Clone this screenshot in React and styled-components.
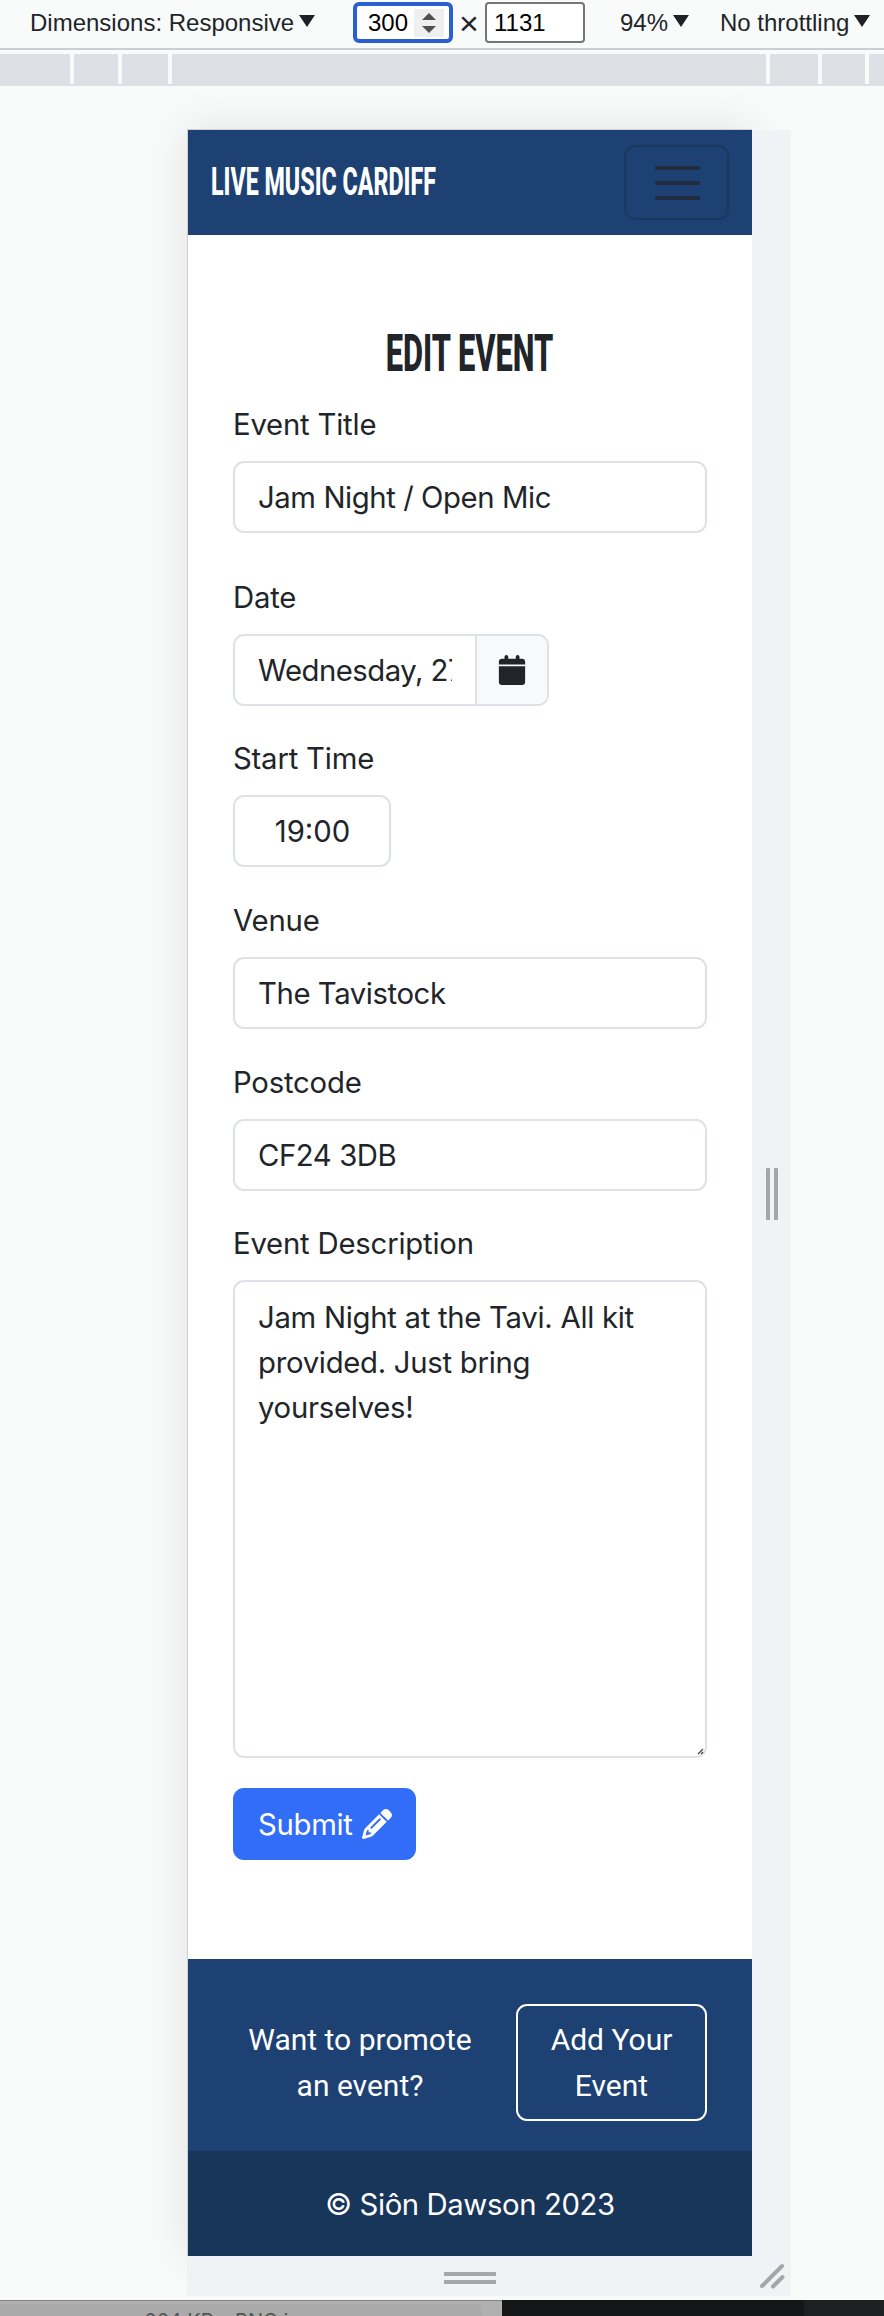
import React from "react";
import styled, { createGlobalStyle } from "styled-components";
import { FaCalendar, FaPencil } from "react-icons/fa6";

const Global = createGlobalStyle`
  *, *::before, *::after { box-sizing: border-box; }
  body { margin: 0; background: #f9fbfa; }
`;

const Window = styled.div`
  width: 884px;
  height: 2316px;
  overflow: hidden;
  display: flex;
  flex-direction: column;
  background: #f9fbfa;
  font-family: Inter, "Liberation Sans", sans-serif;
  color: #212529;
`;

const Toolbar = styled.header`
  height: 50px;
  flex: none;
  display: flex;
  align-items: center;
  padding: 0 0 3px 30px;
  border-bottom: 2px solid #cdced3;
  font: 24px/30px "Liberation Sans", Arial, sans-serif;
  white-space: nowrap;
`;

const Select = styled.div`
  flex: none;
  display: flex;
  align-items: center;
  gap: 5px;
  width: ${(p) => p.$w}px;
  margin-left: ${(p) => p.$gap || 0}px;
  padding-top: 1px;
`;

const Caret = styled.i`
  border: solid transparent;
  border-width: 12px 8px 0;
  border-top-color: #202124;
  margin-top: -4px;
`;

const SizeField = styled.div`
  flex: none;
  width: 100px;
  height: 41px;
  display: flex;
  align-items: center;
  justify-content: space-between;
  padding: 0 5px 0 ${(p) => (p.$focus ? 11 : 7)}px;
  background: #fff;
  color: #000;
  border: ${(p) => (p.$focus ? "4px solid #2a5fcf" : "2px solid #767676")};
  border-radius: ${(p) => (p.$focus ? 6 : 4)}px;
`;

const Spinner = styled.span`
  width: 30px;
  height: 28px;
  background: #efefef;
  display: flex;
  flex-direction: column;
  align-items: center;
  justify-content: space-between;
  padding: 4px 0;
  &::before, &::after { content: ""; border: solid transparent; }
  &::before { border-width: 0 7px 7px; border-bottom-color: #505050; }
  &::after { border-width: 7px 7px 0; border-top-color: #505050; }
`;

const Times = styled.span`
  flex: none;
  width: 32px;
  text-align: center;
  font-size: 34px;
  padding-top: 1px;
`;

const Ruler = styled.div`
  height: 32px;
  flex: none;
  margin-top: 4px;
  display: grid;
  grid-template-columns: 70px 48px 50px 598px 52px 47px 19px;
  background: #dfe0e6;
`;

const Segment = styled.span`
  height: 30px;
  border-left: ${(p) => (p.$first ? 0 : 4)}px solid #f9fbfa;
`;

const Stage = styled.main`
  height: 2214px;
  flex: none;
  padding: 43px 0 0 187px;
`;

const Device = styled.div`
  width: 604px;
  display: grid;
  grid-template-columns: 565px 39px;
  grid-template-rows: 2127px 40px;
`;

const Screen = styled.section`
  display: flex;
  flex-direction: column;
  background: #fff;
  border: solid #cfd0d2;
  border-width: 1px 0 0 1px;
  box-shadow: 0 0 42px rgba(0, 0, 0, 0.1);
`;

const Gutter = styled.div`
  position: relative;
  display: flex;
  align-items: center;
  justify-content: center;
  background: #f1f2f5;
  margin-top: ${(p) => (p.$side ? 1 : 0)}px;
  padding-top: ${(p) => p.$drop || 0}px;
`;

const Grip = styled.span`
  width: ${(p) => (p.$vertical ? 12 : 52)}px;
  height: ${(p) => (p.$vertical ? 52 : 12)}px;
  border: solid #a6a6a6;
  border-width: ${(p) => (p.$vertical ? "0 4px" : "4px 0")};
  border-radius: 1px;
`;

const Navbar = styled.nav`
  height: 105px;
  flex: none;
  padding: 0 23px;
  display: flex;
  align-items: center;
  justify-content: space-between;
  background: #1d4172;
`;

const Condensed = styled.span`
  display: block;
  font-family: Roboto, "Liberation Sans", sans-serif;
  font-weight: 800;
  white-space: nowrap;
  text-transform: uppercase;
  transform-origin: ${(p) => p.$origin} center;
  transform: scaleX(${(p) => p.$squeeze});
`;

const Brand = styled(Condensed)`
  font-size: 38.5px;
  line-height: 46px;
  width: 230px;
  margin-bottom: 2px;
  color: #fff;
`;

const Toggler = styled.button`
  width: 105px;
  height: 75px;
  padding: 0 29px;
  display: flex;
  flex-direction: column;
  justify-content: center;
  gap: 11px;
  background: none;
  border: 2px solid #1b3860;
  border-radius: 11px;
`;

const Bar = styled.span`
  height: 4px;
  width: 45px;
  border-radius: 1px;
  background: #212c3f;
`;

const Form = styled.form`
  flex: 1;
  padding: 86px 45px 0;
  display: flex;
  flex-direction: column;
  align-items: flex-start;
`;

const Title = styled.h1`
  margin: 0 0 16px;
  align-self: stretch;
  height: 64px;
  display: flex;
  justify-content: center;
  align-items: center;
  font-size: 51px;
`;

const Field = styled.div`
  width: ${(p) => p.$w || 474}px;
  height: ${(p) => p.$h}px;
  flex: none;
`;

const Label = styled.label`
  display: block;
  height: 60px;
  padding-top: 1px;
  font-size: 29.3px;
  line-height: 45px;
  white-space: nowrap;
  letter-spacing: -0.2px;
`;

const Box = styled.div`
  height: 72px;
  padding: 12px 22px 0 23px;
  border: 2px solid #dee2e6;
  border-radius: 11px;
  background: #fff;
  font-size: 29.3px;
  line-height: 45px;
  text-align: ${(p) => p.$align || "left"};
  letter-spacing: ${(p) => p.$ls ?? -0.42}px;
  white-space: pre-line;
`;

const TextArea = styled(Box)`
  height: 478px;
  padding-top: 13px;
  position: relative;
`;

const InputGroup = styled.div`
  display: flex;
  height: 72px;
  border: 2px solid #dee2e6;
  border-radius: 11px;
  overflow: hidden;
`;

const DateText = styled.div`
  width: 240px;
  padding: 12px 0 0 23px;
  font-size: 29.3px;
  line-height: 45px;
  letter-spacing: -0.5px;
  span {
    display: block;
    width: 194px;
    overflow: hidden;
    white-space: nowrap;
  }
`;

const Addon = styled.div`
  flex: 1;
  display: flex;
  align-items: center;
  justify-content: center;
  background: #f8f9fa;
  border-left: 2px solid #dee2e6;
  font-size: 30px;
`;

const Resizer = styled.svg`
  position: absolute;
  right: 1px;
  bottom: 1px;
`;

const Submit = styled.button`
  width: 183px;
  height: 72px;
  margin: 0;
  padding: 0 0 0 25px;
  display: flex;
  align-items: center;
  gap: 8px;
  border: 0;
  border-radius: 11px;
  background: #326df7;
  color: #fff;
  font: 29.3px/45px Inter, sans-serif;
  span { width: 96px; text-align: left; letter-spacing: -0.3px; }
  svg { font-size: 30px; }
`;

const Promo = styled.div`
  height: 192px;
  flex: none;
  padding: 45px 45px 0 53px;
  display: flex;
  justify-content: space-between;
  background: #1d4172;
  color: #fff;
  font: 30px/46px Roboto, sans-serif;
  text-align: center;
`;

const Invite = styled.p`
  margin: 0;
  width: 238px;
  padding-top: 13px;
`;

const AddButton = styled.a`
  width: 191px;
  height: 117px;
  padding: 11px 20px 0;
  border: 2px solid #fff;
  border-radius: 11px;
`;

const Copyright = styled.footer`
  height: 105px;
  flex: none;
  display: flex;
  align-items: center;
  justify-content: center;
  padding-top: 2px;
  background: #18355a;
  color: #fff;
  font-size: 29.3px;
  letter-spacing: -0.4px;
`;

const Backdrop = styled.div`
  height: 16px;
  flex: none;
  display: grid;
  grid-template-columns: 502px 302px 80px;
`;

const FileCard = styled.div`
  overflow: hidden;
  background: #b0b0b0;
  border-top: 1px solid #858585;
  padding: 3px 20px 0 0;
  div {
    height: 30px;
    padding: 5px 0 0 144px;
    border-radius: 0 8px 0 0;
    background: #a9aaa9;
    color: #555;
    font: 20px/24px Inter, sans-serif;
    white-space: pre;
  }
`;

const Dark = styled.div`
  background: ${(p) => p.$tone};
`;

export default function App() {
  return (
    <>
      <Global />
      <Window>
        <Toolbar>
          <Select $w={323}>Dimensions: Responsive <Caret /></Select>
          <SizeField $focus>300<Spinner /></SizeField>
          <Times>×</Times>
          <SizeField>1131</SizeField>
          <Select $w={100} $gap={35}>94% <Caret /></Select>
          <Select $w={160}>No throttling <Caret /></Select>
        </Toolbar>
        <Ruler>
          {[0, 1, 2, 3, 4, 5, 6].map((n) => <Segment key={n} $first={n === 0} />)}
        </Ruler>
        <Stage>
          <Device>
            <Screen>
              <Navbar>
                <Brand $squeeze={0.603} $origin="left">Live Music Cardiff</Brand>
                <Toggler aria-label="Menu"><Bar /><Bar /><Bar /></Toggler>
              </Navbar>
              <Form>
                <Title><Condensed $squeeze={0.605} $origin="center">Edit Event</Condensed></Title>
                <Field $h={173}>
                  <Label>Event Title</Label>
                  <Box>Jam Night / Open Mic</Box>
                </Field>
                <Field $h={161} $w={316}>
                  <Label>Date</Label>
                  <InputGroup>
                    <DateText><span>Wednesday, 27 September</span></DateText>
                    <Addon><FaCalendar /></Addon>
                  </InputGroup>
                </Field>
                <Field $h={162} $w={158}>
                  <Label>Start Time</Label>
                  <Box $align="center" $ls={0}>19:00</Box>
                </Field>
                <Field $h={162}>
                  <Label>Venue</Label>
                  <Box>The Tavistock</Box>
                </Field>
                <Field $h={161}>
                  <Label>Postcode</Label>
                  <Box>CF24 3DB</Box>
                </Field>
                <Field $h={568}>
                  <Label>Event Description</Label>
                  <TextArea $ls={-0.28}>
                    {"Jam Night at the Tavi. All kit\nprovided. Just bring\nyourselves!"}
                    <Resizer width="7" height="7" viewBox="0 0 7 7" stroke="#444" strokeWidth="1.2">
                      <path d="M1 6 6 1M4 6 6 4" />
                    </Resizer>
                  </TextArea>
                </Field>
                <Submit type="button"><span>Submit</span><FaPencil /></Submit>
              </Form>
              <Promo>
                <Invite>Want to promote an event?</Invite>
                <AddButton>Add Your Event</AddButton>
              </Promo>
              <Copyright>© Siôn Dawson 2023</Copyright>
            </Screen>
            <Gutter $side $drop={2}><Grip $vertical /></Gutter>
            <Gutter $drop={4}><Grip /></Gutter>
            <Gutter>
              <svg width="26" height="26" viewBox="0 0 26 26" stroke="#a6a6a6" strokeWidth="4" strokeLinecap="round">
                <path d="M3 23 23 3M14 23.500 23.500 14" />
              </svg>
            </Gutter>
          </Device>
        </Stage>
        <Backdrop>
          <FileCard><div>664 KB – PNG image</div></FileCard>
          <Dark $tone="#151618" />
          <Dark $tone="#1f2022" />
        </Backdrop>
      </Window>
    </>
  );
}
